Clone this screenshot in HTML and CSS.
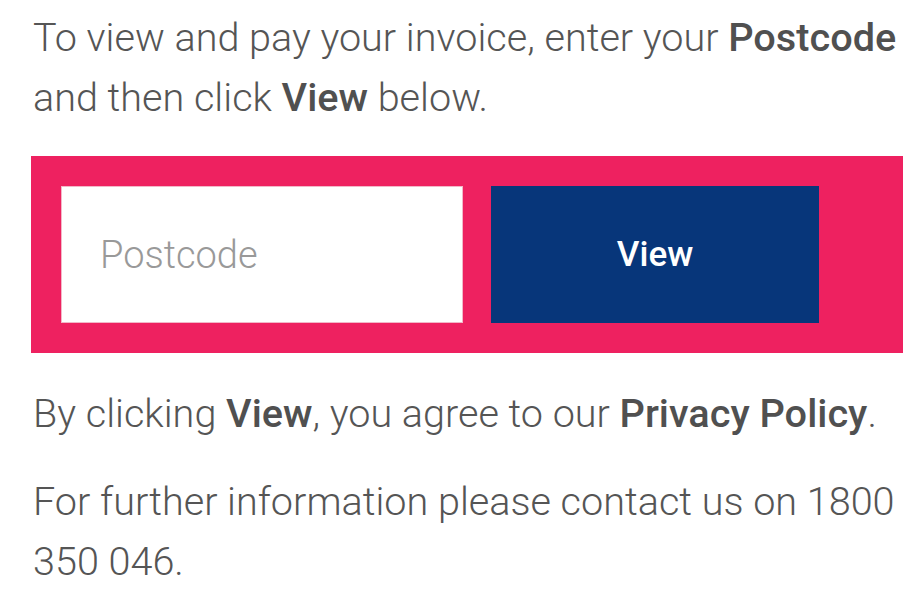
FILE: index.html
```html
<!DOCTYPE html>
<html lang="en">
<head>
  <meta charset="UTF-8" />
  <meta name="viewport" content="width=device-width, initial-scale=1" />
  <title>Pay your invoice</title>
  <link rel="stylesheet" href="styles.css">
</head>
<body>
  <div class="content">
    <p class="intro">To view and pay your invoice, enter your <strong>Postcode</strong> and then click <strong>View</strong> below.</p>

    <form class="lookup" onsubmit="return false;">
      <input class="postcode" type="text" placeholder="Postcode" />
      <button class="view-btn" type="submit">View</button>
    </form>

    <p class="note">By clicking <strong>View</strong>, you agree to our <strong>Privacy Policy</strong>.</p>
    <p class="note">For further information please contact us on 1800 350 046.</p>
  </div>
</body>
</html>
```

FILE: styles.css
```css
body {
  font-family: Roboto, 'Liberation Sans', sans-serif;
  font-weight: 300;
  background: #fff;
  color: #555;
  margin: 0;
}

.content {
  padding: 8px 17px 0 31px;
}

p {
  font-size: 39.6px;
  line-height: 60px;
  margin: 0 -17px 0 2px;
}

strong {
  font-family: 'Roboto Medium', Roboto, 'Liberation Sans', sans-serif;
  font-weight: 500;
  color: #505050;
}

.lookup {
  display: flex;
  gap: 28px;
  background: #ee2160;
  padding: 30px 84px 30px 30px;
  margin: 28px 0 31px;
}

.postcode {
  box-sizing: border-box;
  width: 402px;
  height: 137px;
  border: 1px solid #f2b8c8;
  background: #fff;
  padding: 0 0 0 38px;
  font-family: Roboto, 'Liberation Sans', sans-serif;
  font-weight: 300;
  font-size: 38px;
  color: #555;
  outline: none;
}

.postcode::placeholder {
  color: #999;
}

.view-btn {
  width: 328px;
  height: 137px;
  border: none;
  background: #07367a;
  color: #fff;
  font-family: 'Roboto Medium', Roboto, 'Liberation Sans', sans-serif;
  font-weight: 500;
  font-size: 35px;
  cursor: pointer;
}

.note + .note {
  margin-top: 28px;
}
```
